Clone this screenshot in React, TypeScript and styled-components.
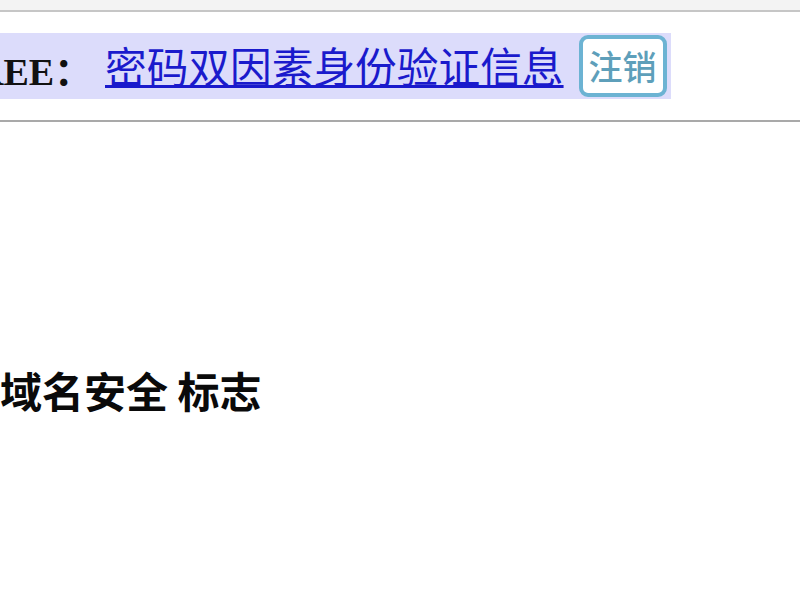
import React from "react";
import styled, { createGlobalStyle } from "styled-components";

const Global = createGlobalStyle`
  html, body { margin: 0; padding: 0; background: #ffffff; overflow: hidden; }
  body { width: 800px; height: 600px; }
`;

const Page = styled.div`
  width: 800px;
  height: 600px;
  overflow: hidden;
  background: #ffffff;
`;

const TopStrip = styled.div`
  height: 10px;
  background: #f3f3f3;
  border-bottom: 2px solid #c6c6c6;
`;

const Header = styled.header`
  height: 110px;
  box-sizing: border-box;
  padding-top: 21px;
  border-bottom: 2px solid #a9a9a9;
`;

const Band = styled.div`
  display: inline-flex;
  align-items: center;
  height: 66px;
  margin-left: -24px;
  padding-right: 4px;
  background: #dcdcfb;
`;

const Label = styled.span`
  font-family: "Liberation Serif", "Noto Sans CJK SC", serif;
  font-weight: bold;
  font-size: 38px;
  color: #111111;
  width: 129px;
  white-space: nowrap;
  margin-top: 4px;
`;

const Link = styled.a`
  font-family: "Noto Sans CJK SC", sans-serif;
  font-size: 41.7px;
  line-height: 1;
  color: #1a1acc;
  text-decoration: underline;
  text-decoration-thickness: 3px;
  text-underline-offset: 2px;
  white-space: nowrap;
  cursor: pointer;
`;

const Button = styled.button`
  margin-left: 15px;
  height: 62px;
  width: 88px;
  box-sizing: border-box;
  border: 4px solid #6cb3d3;
  border-radius: 9px;
  background: #ffffff;
  color: #5e9fba;
  font-family: "Noto Sans CJK SC", sans-serif;
  font-weight: 500;
  font-size: 34px;
  line-height: 1;
  padding: 0;
  cursor: pointer;
`;

const Main = styled.main`
  padding-top: 247px;
`;

const Title = styled.h1`
  margin: 0;
  font-family: "Noto Sans CJK SC", sans-serif;
  font-weight: bold;
  font-size: 42px;
  line-height: 42px;
  color: #0a0a0a;
  white-space: nowrap;
`;

export default function App() {
  return (
    <Page>
      <Global />
      <TopStrip />
      <Header>
        <Band>
          <Label>REE：</Label>
          <Link>密码双因素身份验证信息</Link>
          <Button>注销</Button>
        </Band>
      </Header>
      <Main>
        <Title>域名安全 标志</Title>
      </Main>
    </Page>
  );
}
